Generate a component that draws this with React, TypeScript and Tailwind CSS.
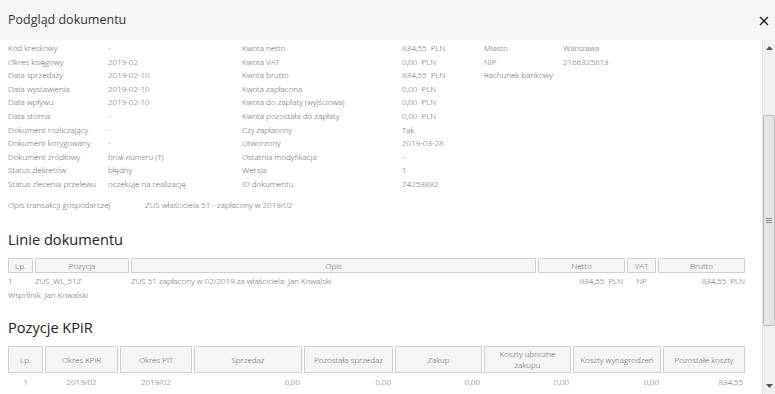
import React from "react";

const info: [string, React.ReactNode, string, string, string, string][] = [
  ["Kod kreskowy", "-", "Kwota netto", "834,55\u00a0\u00a0PLN", "Miasto", "Warszawa"],
  ["Okres księgowy", "2019-02", "Kwota VAT", "0,00\u00a0\u00a0PLN", "NIP", "2166325813"],
  ["Data sprzedaży", "2019-02-10", "Kwota brutto", "834,55\u00a0\u00a0PLN", "Rachunek bankowy", ""],
  ["Data wystawienia", "2019-02-10", "Kwota zapłacona", "0,00\u00a0\u00a0PLN", "", ""],
  ["Data wpływu", "2019-02-10", "Kwota do zapłaty (wyjściowa)", "0,00\u00a0\u00a0PLN", "", ""],
  ["Data storna", "-", "Kwota pozostała do zapłaty", "0,00\u00a0\u00a0PLN", "", ""],
  ["Dokument rozliczający", "-", "Czy zapłacony", "Tak", "", ""],
  ["Dokument korygowany", "-", "Utworzony", "2019-03-28", "", ""],
  [
    "Dokument źródłowy",
    <span>
      <i>brak numeru</i> (T)
    </span>,
    "Ostatnia modyfikacja",
    "-",
    "",
    "",
  ],
  ["Status dekretów", "błędny", "Wersja", "1", "", ""],
  ["Status zlecenia przelewu", "oczekuje na realizację", "ID dokumentu", "24253882", "", ""],
];

const th = "bg-[#f5f5f5] border border-[#cfcfcf] font-light text-center align-middle p-0";

function Scrollbar() {
  return (
    <div className="w-[13px] shrink-0 bg-[#f0f0f0] border-l border-[#e3e3e3] flex flex-col items-center">
      <div className="h-[14px] flex items-center justify-center pt-[2px]">
        <svg width="7" height="4" viewBox="0 0 7 4">
          <path d="M0 4 L3.5 0 L7 4 Z" fill="#555" />
        </svg>
      </div>
      <div className="h-[61px]" />
      <div className="w-[12px] h-[211px] bg-[#e6e6e6] border border-[#bdbdbd] rounded-[2px] flex items-center justify-center">
        <div className="flex flex-col gap-[1px]">
          <div className="w-[6px] h-px bg-[#8a8a8a]" />
          <div className="w-[6px] h-px bg-[#8a8a8a]" />
          <div className="w-[6px] h-px bg-[#8a8a8a]" />
        </div>
      </div>
      <div className="flex-1" />
      <div className="h-[12px] flex items-center justify-center pb-[4px]">
        <svg width="7" height="4" viewBox="0 0 7 4">
          <path d="M0 0 L3.5 4 L7 0 Z" fill="#555" />
        </svg>
      </div>
    </div>
  );
}

export default function App() {
  return (
    <div className="w-[775px] h-[394px] overflow-hidden flex flex-col bg-white font-['Open_Sans',sans-serif] text-[#555]">
      {/* header */}
      <div className="h-[40px] shrink-0 bg-[#f5f5f5] flex items-center justify-between pl-[8px] pr-[6px]">
        <h1 className="text-[12.5px] text-[#333] font-normal">Podgląd dokumentu</h1>
        <svg width="10" height="10" viewBox="0 0 10 10" className="mt-[2px]">
          <path d="M1 1 L9 9 M9 1 L1 9" stroke="#222" strokeWidth="1.4" />
        </svg>
      </div>

      <div className="flex flex-1 min-h-0">
        <div className="flex-1 min-w-0 pl-[8px] pr-[16px] pt-[1px] text-[8px] font-light overflow-hidden">
          {/* info grid */}
          <div className="grid grid-cols-[100px_134px_160px_82px_79px_1fr] leading-[13.6px] whitespace-nowrap">
            {info.map((r, i) => (
              <React.Fragment key={i}>
                <div>{r[0]}</div>
                <div>{r[1]}</div>
                <div>{r[2]}</div>
                <div>{r[3]}</div>
                <div>{r[4]}</div>
                <div>{r[5]}</div>
              </React.Fragment>
            ))}
          </div>
          <div className="flex mt-[7px] leading-[13.6px]">
            <div className="w-[137px]">Opis transakcji gospodarczej</div>
            <div>ZUS właściciela 51 - zapłacony w 2019/02</div>
          </div>

          {/* Linie dokumentu */}
          <h2 className="text-[14.6px] font-normal text-[#222] mt-[17px] leading-[22px]">Linie dokumentu</h2>
          <table className="w-[741px] -ml-[2px] mt-[8px] table-fixed border-separate border-spacing-x-[2px] border-spacing-y-0">
            <colgroup>
              <col className="w-[25px]" />
              <col className="w-[94px]" />
              <col />
              <col className="w-[87px]" />
              <col className="w-[29px]" />
              <col className="w-[87px]" />
            </colgroup>
            <thead>
              <tr className="h-[15px]">
                <th className={th}>Lp.</th>
                <th className={th}>Pozycja</th>
                <th className={th}>Opis</th>
                <th className={th}>Netto</th>
                <th className={th}>VAT</th>
                <th className={th}>Brutto</th>
              </tr>
            </thead>
            <tbody>
              <tr className="h-[16px]">
                <td className="p-0">1</td>
                <td className="p-0">ZUS_WL_51Z</td>
                <td className="p-0 whitespace-nowrap">ZUS 51 zapłacony w 02/2019 za właściciela: Jan Kowalski</td>
                <td className="p-0 text-right pr-[2px]">834,55&nbsp;&nbsp;PLN</td>
                <td className="p-0 text-center">NP</td>
                <td className="p-0 text-right">834,55&nbsp;&nbsp;PLN</td>
              </tr>
            </tbody>
          </table>
          <div className="leading-[13.6px] -mt-[1px]">Wspólnik: Jan Kowalski</div>

          {/* Pozycje KPiR */}
          <h2 className="text-[14.6px] font-normal text-[#222] mt-[14px] leading-[22px]">Pozycje KPiR</h2>
          <table className="w-[741px] -ml-[2px] mt-[8px] table-fixed border-separate border-spacing-x-[2px] border-spacing-y-0">
            <colgroup>
              <col className="w-[35px]" />
              <col className="w-[73px]" />
              <col className="w-[72px]" />
              <col className="w-[108px]" />
              <col className="w-[89px]" />
              <col className="w-[87px]" />
              <col className="w-[87px]" />
              <col className="w-[88px]" />
              <col />
            </colgroup>
            <thead>
              <tr className="h-[27px] leading-[11px]">
                <th className={th}>Lp.</th>
                <th className={th}>Okres KPiR</th>
                <th className={th}>Okres PIT</th>
                <th className={th}>Sprzedaż</th>
                <th className={th}>Pozostała sprzedaż</th>
                <th className={th}>Zakup</th>
                <th className={th}>
                  Koszty uboczne
                  <br />
                  zakupu
                </th>
                <th className={th + " whitespace-nowrap"}>Koszty wynagrodzeń</th>
                <th className={th}>Pozostałe koszty</th>
              </tr>
            </thead>
            <tbody>
              <tr className="h-[18px]">
                <td className="p-0 text-center">1</td>
                <td className="p-0 text-center">2019/02</td>
                <td className="p-0 text-center">2019/02</td>
                <td className="p-0 text-right pr-[2px]">0,00</td>
                <td className="p-0 text-right pr-[2px]">0,00</td>
                <td className="p-0 text-right pr-[2px]">0,00</td>
                <td className="p-0 text-right pr-[2px]">0,00</td>
                <td className="p-0 text-right pr-[2px]">0,00</td>
                <td className="p-0 text-right pr-[2px]">834,55</td>
              </tr>
            </tbody>
          </table>
        </div>
        <Scrollbar />
      </div>
    </div>
  );
}
